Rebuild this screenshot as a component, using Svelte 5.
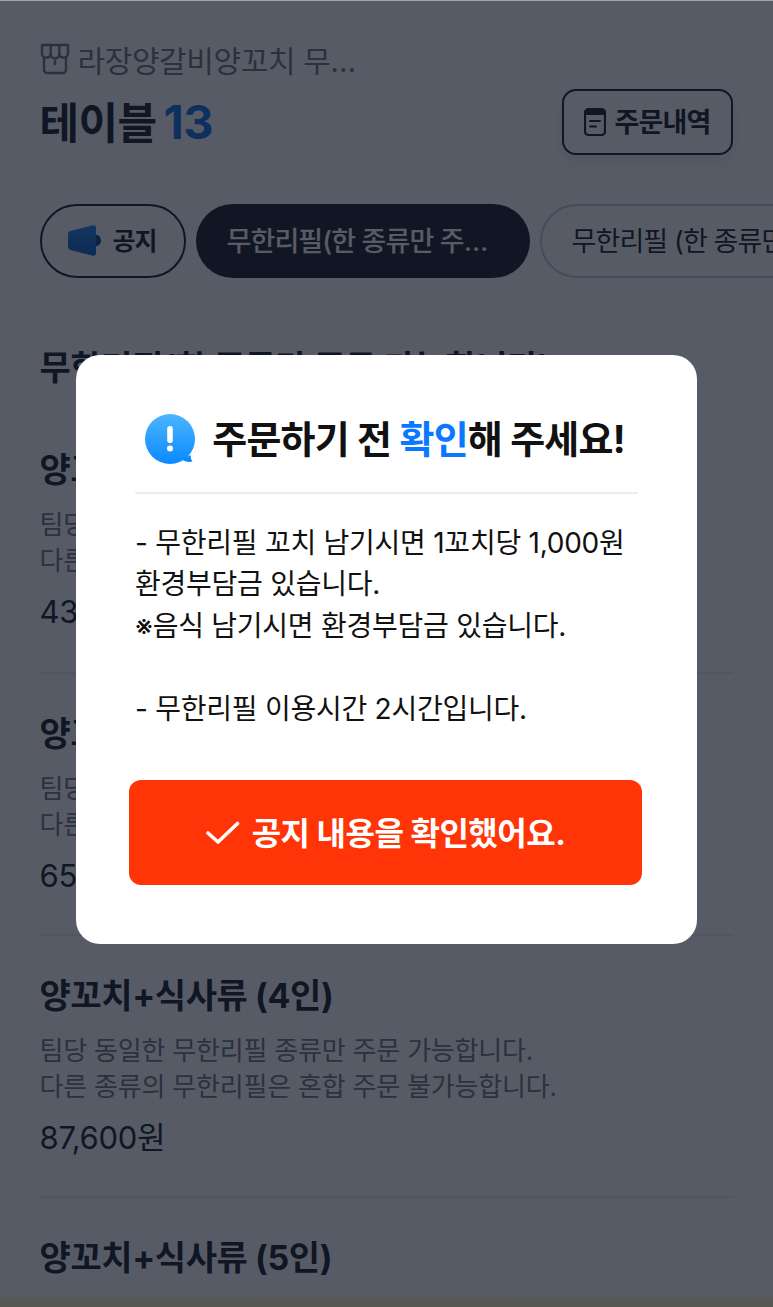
<script>
	const items = [
		{ name: '양꼬치+식사류 (2인)', price: '43,800원' },
		{ name: '양꼬치+식사류 (3인)', price: '65,700원' },
		{ name: '양꼬치+식사류 (4인)', price: '87,600원' },
		{ name: '양꼬치+식사류 (5인)', price: '109,500원' }
	];
</script>

<div class="page">
	<header class="header">
		<div class="head-left">
			<div class="store">
				<svg class="store-icon" viewBox="0 0 30 32" width="30" height="32" fill="none" stroke="#6b7280" stroke-width="2.4" stroke-linejoin="round" stroke-linecap="round">
					<path d="M2 2h26v9a4 4 0 0 1-4.300 3.600A4.300 4.300 0 0 1 19.300 11a4.300 4.300 0 0 1-8.600 0 4.300 4.300 0 0 1-4.400 3.600A4 4 0 0 1 2 11z" />
					<path d="M10.700 2v9M19.300 2v9" />
					<path d="M4 14.500V27a3 3 0 0 0 3 3h16a3 3 0 0 0 3-3V14.500" />
					<path d="M15 18v3" />
				</svg>
				<span class="store-name">라장양갈비양꼬치 무한리필</span>
			</div>
			<h1 class="table">테이블 <span class="table-no">13</span></h1>
		</div>
		<button class="orders">
			<svg viewBox="0 0 22 28" width="22" height="28">
				<rect x="1" y="1" width="20" height="26" rx="3.500" fill="none" stroke="#111827" stroke-width="2.200" />
				<path d="M1 5a4 4 0 0 1 4-4h12a4 4 0 0 1 4 4v2H1z" fill="#111827" />
				<path d="M6 13h10M6 18.500h6" stroke="#111827" stroke-width="2" stroke-linecap="round" />
			</svg>
			<span class="label">주문내역</span>
		</button>
	</header>

	<nav class="tabs">
		<button class="tab notice">
			<svg viewBox="0 0 34 32" width="34" height="32">
				<defs>
					<linearGradient id="cone" x1="0" y1="0" x2="0" y2="1">
						<stop offset="0" stop-color="#1f82e6" />
						<stop offset="1" stop-color="#0a5fc8" />
					</linearGradient>
				</defs>
				<circle cx="27" cy="15.500" r="6" fill="#0a3f96" />
				<path d="M0 9a3 3 0 0 1 2.200-2.900L25 .300a2.300 2.300 0 0 1 3 2.200v26a2.300 2.300 0 0 1-3 2.200L2.200 24.900A3 3 0 0 1 0 22z" fill="url(#cone)" />
			</svg>
			<span class="label">공지</span>
		</button>
		<button class="tab active"><span class="tab-text">무한리필(한 종류만 주문 가능합니다)</span></button>
		<button class="tab plain"><span class="label">무한리필 (한 종류만 주문 가능합니다)</span></button>
	</nav>

	<section class="menu">
		<h2 class="section-title">무한리필(한 종류만 주문 가능합니다)</h2>
		{#each items as item}
			<article class="item">
				<h3 class="item-name">{item.name}</h3>
				<p class="item-desc">팀당 동일한 무한리필 종류만 주문 가능합니다.<br />다른 종류의 무한리필은 혼합 주문 불가능합니다.</p>
				<p class="item-price">{item.price}</p>
			</article>
		{/each}
	</section>
</div>

<div class="overlay">
	<div class="top-line"></div>
	<div class="bottom-strip"></div>
	<div class="modal">
		<div class="modal-head">
			<svg viewBox="0 0 52 52" width="52" height="52">
				<defs>
					<linearGradient id="bubble" x1="0" y1="0" x2="0" y2="1">
						<stop offset="0" stop-color="#4db4ff" />
						<stop offset="1" stop-color="#0a8aff" />
					</linearGradient>
				</defs>
				<path d="M26 1a25 25 0 1 1 0 50a25 25 0 0 1 0-50z" fill="url(#bubble)" />
				<path d="M38 46.500L46.500 42Q46.500 46 48.500 48.500Q42 50 38 46.500z" fill="#0a8aff" />
				<rect x="23.200" y="13" width="5.600" height="17" rx="2.800" fill="#fff" />
				<circle cx="26" cy="35.500" r="3" fill="#fff" />
			</svg>
			<h2 class="modal-title">주문하기 전 <em>확인</em>해 주세요!</h2>
		</div>
		<p class="modal-body">- 무한리필 꼬치 남기시면 1꼬치당 1,000원<br />환경부담금 있습니다.<br />※음식 남기시면 환경부담금 있습니다.<br /><br />- 무한리필 이용시간 2시간입니다.</p>
		<button class="confirm">
			<svg viewBox="0 0 34 24" width="34" height="24" fill="none" stroke="#fff" stroke-width="3.600" stroke-linecap="round" stroke-linejoin="round">
				<path d="M2 12l10 9L31.500 2.500" />
			</svg>
			<span class="label">공지 내용을 확인했어요.</span>
		</button>
	</div>
</div>

<style>
	:global(body) {
		margin: 0;
		background: #fff;
		overflow: hidden;
	}

	.page,
	.overlay {
		font-family: Inter, 'Noto Sans CJK KR', sans-serif;
	}

	.page {
		height: 1307px;
		overflow: hidden;
		color: #111827;
	}

	button {
		font-family: inherit;
		background: none;
		cursor: pointer;
		color: inherit;
	}

	.label {
		display: block;
		margin-top: -4px;
	}

	.header {
		display: flex;
		justify-content: space-between;
		align-items: flex-start;
		padding: 40px 40px 0 39.500px;
	}

	.store {
		display: flex;
		align-items: center;
		gap: 8px;
		height: 38px;
	}

	.store-name {
		width: 285px;
		overflow: hidden;
		white-space: nowrap;
		text-overflow: ellipsis;
		font-size: 30px;
		letter-spacing: -0.400px;
		color: #6b7280;
	}

	.store-icon {
		flex-shrink: 0;
	}

	.table {
		margin: 16px 0 0;
		font-size: 43px;
		line-height: 56px;
		font-weight: 700;
		letter-spacing: -0.500px;
		word-spacing: -3px;
	}

	.table-no {
		color: #0a70e8;
		font-size: 47px;
	}

	.orders {
		display: flex;
		align-items: center;
		justify-content: center;
		gap: 8px;
		width: 171px;
		height: 66px;
		margin: 49px 0 0;
		padding: 0;
		border: 2px solid #111827;
		border-radius: 14px;
		font-size: 27px;
		font-weight: 700;
		letter-spacing: -0.800px;
		box-shadow: 0 8px 16px rgba(17, 24, 39, 0.08);
	}

	.tabs {
		display: flex;
		gap: 10px;
		padding: 49px 0 0 39.500px;
		white-space: nowrap;
	}

	.tab {
		flex-shrink: 0;
		height: 74px;
		padding: 0;
		border-radius: 37px;
		font-size: 27px;
		letter-spacing: -0.900px;
	}

	.notice {
		display: flex;
		align-items: center;
		justify-content: center;
		gap: 10px;
		width: 146px;
		border: 2px solid #111827;
		font-weight: 700;
		font-size: 25px;
		letter-spacing: -1px;
	}

	.active {
		width: 334px;
		padding: 0 30px 4px 31px;
		border: 0;
		background: #111827;
		color: #fff;
		font-weight: 500;
	}

	.tab-text {
		display: block;
		overflow: hidden;
		text-overflow: ellipsis;
	}

	.plain {
		padding: 0 30px;
		border: 2px solid #c5c9d1;
	}

	.menu {
		padding: 0 40px 0 39.500px;
	}

	.section-title {
		margin: 67px 0 0;
		font-size: 34px;
		line-height: 46px;
		font-weight: 700;
		letter-spacing: -0.400px;
	}

	.item {
		height: 262px;
		padding-top: 37px;
		box-sizing: border-box;
		border-bottom: 2px solid #e9edf2;
	}

	.item:first-of-type {
		height: 283px;
		padding-top: 56px;
	}

	.item-name {
		margin: 0;
		font-size: 34px;
		line-height: 46px;
		font-weight: 700;
		letter-spacing: -0.400px;
	}

	.item-desc {
		margin: 14px 0 0;
		font-size: 26px;
		line-height: 36px;
		color: #6b7280;
		letter-spacing: -0.200px;
	}

	.item-price {
		margin: 11px 0 0;
		font-size: 31px;
		line-height: 44px;
		letter-spacing: -0.300px;
	}

	.overlay {
		position: absolute;
		inset: 0;
		height: 1307px;
		display: flex;
		align-items: center;
		justify-content: center;
		padding-bottom: 8px;
		box-sizing: border-box;
		background: rgba(16, 22, 35, 0.7);
	}

	.top-line {
		position: absolute;
		top: 0;
		left: 0;
		right: 0;
		height: 1px;
		background: #a3a5aa;
	}

	.bottom-strip {
		position: absolute;
		bottom: 0;
		left: 0;
		right: 0;
		height: 10px;
		background: linear-gradient(#57595c, #57574f);
	}

	.modal {
		width: 621px;
		height: 589px;
		padding: 0 53px;
		box-sizing: border-box;
		border-radius: 24px;
		background: #fff;
		color: #111;
	}

	.modal-head {
		display: flex;
		align-items: center;
		justify-content: center;
		gap: 16px;
		height: 139px;
		padding: 30px 4px 0 0;
		box-sizing: border-box;
		margin: 0 6px;
		border-bottom: 2px solid #e9eef6;
	}

	.modal-title {
		margin: -4px 0 0;
		font-size: 38px;
		font-weight: 700;
		letter-spacing: -0.800px;
	}

	.modal-title em {
		font-style: normal;
		color: #0a78ff;
	}

	.modal-body {
		margin: 29px 6px 0;
		font-size: 28px;
		line-height: 41.400px;
		letter-spacing: -0.250px;
	}

	.confirm {
		display: flex;
		align-items: center;
		justify-content: center;
		gap: 12px;
		width: 513px;
		height: 105px;
		margin: 50px 0 0 0;
		padding: 0;
		border: 0;
		border-radius: 12px;
		background: #ff3508;
		color: #fff;
		font-size: 32px;
		font-weight: 700;
		letter-spacing: -0.500px;
	}
</style>
